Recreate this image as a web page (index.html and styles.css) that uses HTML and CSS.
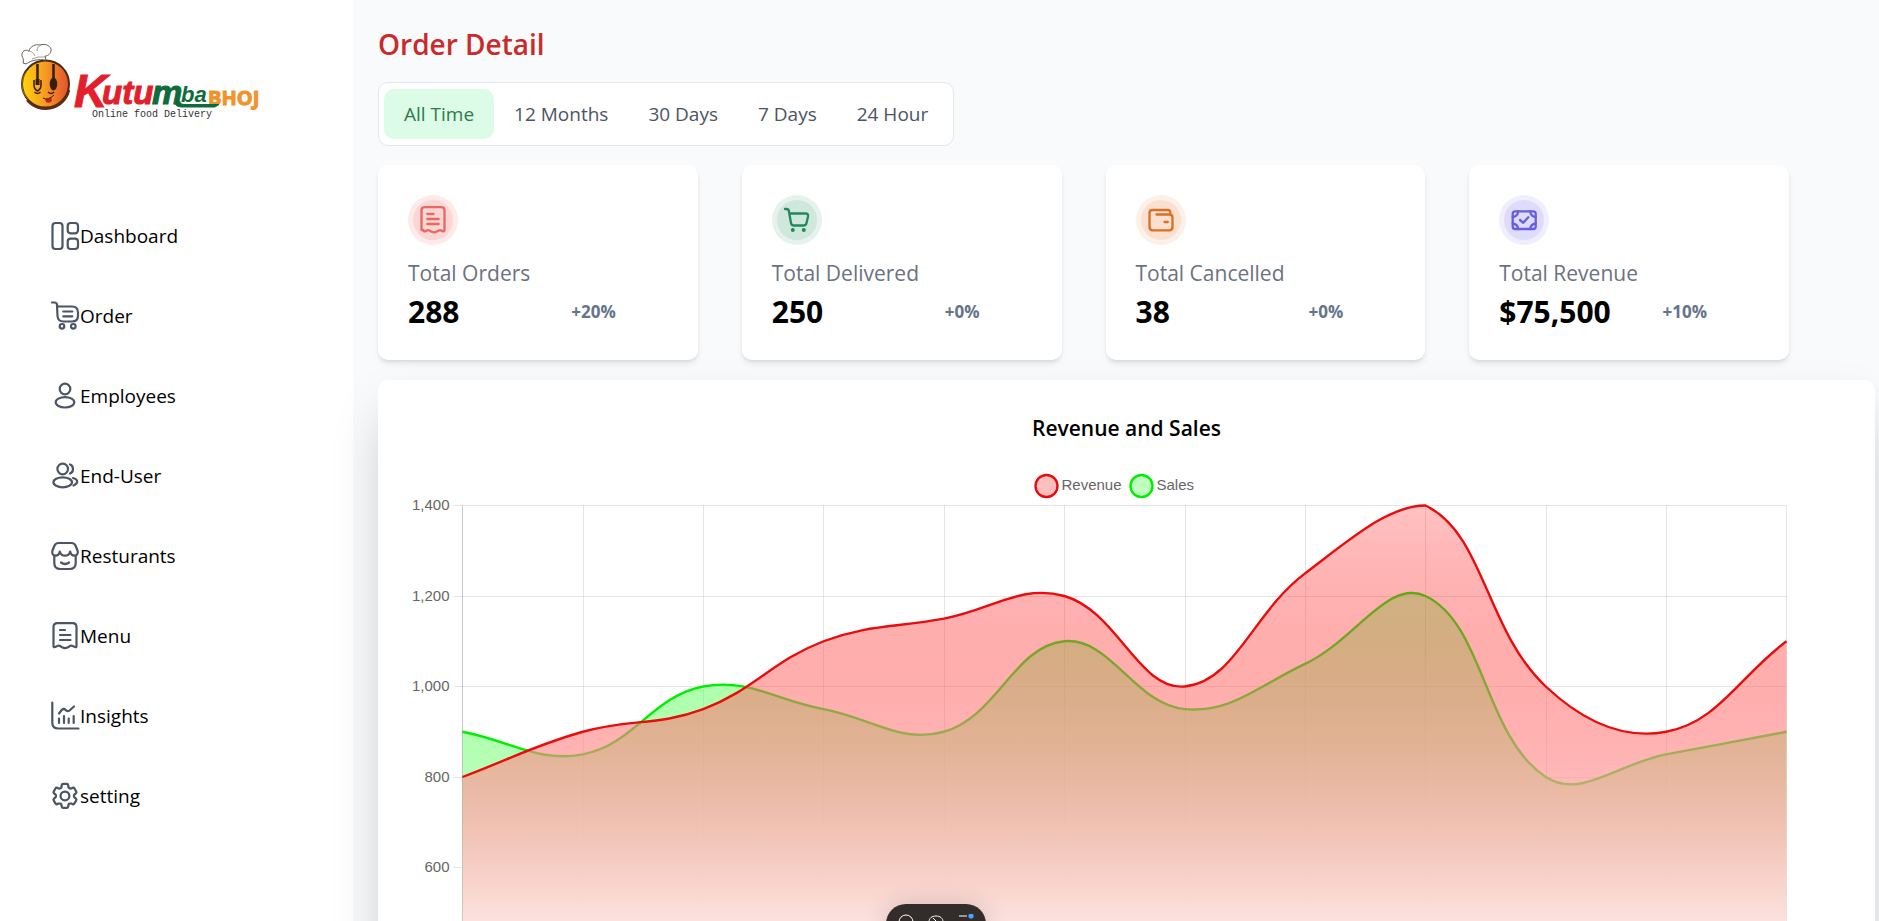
FILE: index.html
```html
<!DOCTYPE html>
<html lang="en">
<head>
<meta charset="utf-8">
<title>Kutumba Bhoj - Order Detail</title>
<link rel="stylesheet" href="styles.css">
</head>
<body>
<div class="app">
  <aside class="sidebar">
    <a class="brand" href="#" aria-label="Kutumba Bhoj">
      <svg class="logo" viewBox="0 0 280 110" width="280" height="110">
        <defs>
          <linearGradient id="face" x1="0" y1="0" x2="1" y2="0">
            <stop offset="0" stop-color="#ffd60a"/><stop offset=".5" stop-color="#f59a23"/><stop offset="1" stop-color="#e2502f"/>
          </linearGradient>
        </defs>
        <circle cx="45.500" cy="54" r="23.500" fill="url(#face)" stroke="#4a2b12" stroke-width="2"/>
        <path d="M27 70a24 24 0 0 0 42-10" fill="none" stroke="#5a2d10" stroke-width="2.500"/>
        <path d="M29 39a20.500 20.500 0 0 0-1 30" fill="none" stroke="#a86b10" stroke-width="1"/>
        <path d="M23 33c1-3 0-5-1-7-1-5 4-7 7-5 1-5 7-7 11-6 5-2 12 1 11 6-1 4-4 5-6 5l1 4c-8-1-14 0-20 4z" fill="#fff" stroke="#6b6259" stroke-width="1"/>
        <path d="M28 21q5 0 7 5M41 15q-5 2-4 6M32 29q6-3 13-2" fill="none" stroke="#8d857c" stroke-width=".8"/>
        <path d="M37.500 34v21M53.500 34v21" stroke="#3a1d0c" stroke-width="2.500"/>
        <path d="M34 50v5q0 4 3.500 6 3.500-2 3.500-6v-5M36.300 49v6M38.800 49v6" fill="none" stroke="#3a1d0c" stroke-width="1.500"/>
        <ellipse cx="53.500" cy="54" rx="3.800" ry="6.500" fill="#3a1d0c"/>
        <path d="M34.500 62q3 3 6 0M48 62q3 3 6 0" fill="none" stroke="#3a1d0c" stroke-width="1.200"/>
        <path d="M45 69q4 1 6-2l1 4q-3 3-6 1z" fill="#c81e1e"/>
        <path d="M43 68q5 3 11-3" fill="none" stroke="#3a1d0c"/>
        <g class="logo-word">
          <text class="logo-k" x="74" y="77">K</text>
          <text class="logo-utu" x="102" y="74">utu</text>
          <text class="logo-m" x="152" y="74">m</text>
          <text class="logo-ba" x="181" y="72">ba</text>
          <text class="logo-bhoj" x="208" y="75">BHOJ</text>
          <text class="logo-tag" x="92" y="87">Online food Delivery</text>
        </g>
        <path d="M175 73q1 4 7 4h33l4-2.500h-34q-5 0-5-3z" fill="#0f6b3a" stroke="#0f6b3a"/>
      </svg>
    </a>
    <nav class="menu">
      <a class="menu-item" href="#">
        <svg class="menu-icon" viewBox="0 0 30 30"><rect x="2.500" y="2" width="10" height="26" rx="3"/><rect x="17.700" y="2" width="10.300" height="10.300" rx="3"/><rect x="17.700" y="17.700" width="10.300" height="10.300" rx="3"/></svg>
        <span>Dashboard</span></a>
      <a class="menu-item" href="#">
        <svg class="menu-icon" viewBox="0 0 30 30"><path d="M2 1.500h2.500q2 0 2.500 2L7.500 5.500H22q6 0 6 6v3q0 6-6 6h-8.500q-5.500 0-6-5.500L7 4M13.300 10.500h9M13.300 15.300h9"/><circle cx="12" cy="25.300" r="2.300"/><circle cx="23.300" cy="25.300" r="2.300"/></svg>
        <span>Order</span></a>
      <a class="menu-item" href="#">
        <svg class="menu-icon" viewBox="0 0 30 30"><circle cx="15" cy="8" r="5.300"/><ellipse cx="15" cy="21.300" rx="9.300" ry="5.200"/></svg>
        <span>Employees</span></a>
      <a class="menu-item" href="#">
        <svg class="menu-icon" viewBox="0 0 30 30"><circle cx="12.700" cy="8" r="5.300"/><ellipse cx="12.700" cy="21.300" rx="9.300" ry="5"/><path d="M20 3.500c4 1.500 4 7.500 0 9M23 17c5.500 1.500 5.500 5.500 .5 7.500"/></svg>
        <span>End-User</span></a>
      <a class="menu-item" href="#">
        <svg class="menu-icon" viewBox="0 0 30 30"><path d="M8.500 2h13q3 0 4.200 3l2 5q.7 4.500-3.300 4.700-3.400 0-4.200-4.200-1 4.200-5.200 4.200t-5.200-4.200q-.8 4.200-4.200 4.200-4-.2-3.300-4.700l2-5q1.200-3 4.200-3zM4.300 14.500V22q0 6 6 6h9.400q6 0 6-6v-7.500M11 21.500q4 3 8 0"/></svg>
        <span>Resturants</span></a>
      <a class="menu-item" href="#">
        <svg class="menu-icon" viewBox="0 0 30 30"><path d="M3.500 25V6q0-3.800 3.800-3.800h15.400q3.800 0 3.800 3.800v19q0 1.500-1.500 1l-3-1.200q-1-.4-2 .2l-2.600 1.600q-2.400 1.200-4.800 0L10 25q-1-.6-2-.2L5 26q-1.500 .5-1.500-1zM10 9h5M10 14h10.500M10 19h10.500"/></svg>
        <span>Menu</span></a>
      <a class="menu-item" href="#">
        <svg class="menu-icon" viewBox="0 0 30 30"><path d="M2.300 1.500v20q0 6 6 6H28.500M9 17.500v4.500M14 15v7M18.700 17.500v4.500M23.700 15v7M9 12.500l2.700-3.500q2-2 4 0t3.800 .5l4.500-4"/></svg>
        <span>Insights</span></a>
      <a class="menu-item" href="#">
        <svg class="menu-icon" viewBox="0 0 30 30"><g class="gear" transform="translate(-1 -1) scale(1.330)"><path d="M9.594 3.940c.09-.542.56-.94 1.110-.94h2.593c.55 0 1.020.398 1.110.94l.213 1.281c.063.374.313.686.645.87.074.04.147.083.22.127.325.196.72.257 1.075.124l1.217-.456a1.125 1.125 0 0 1 1.370.49l1.296 2.247a1.125 1.125 0 0 1-.26 1.431l-1.003.827c-.293.241-.438.613-.43.992a7.723 7.723 0 0 1 0 .255c-.008.378.137.75.43.991l1.004.827c.424.35.534.955.26 1.430l-1.298 2.247a1.125 1.125 0 0 1-1.369.491l-1.217-.456c-.355-.133-.75-.072-1.076.124a6.470 6.470 0 0 1-.22.128c-.331.183-.581.495-.644.869l-.213 1.281c-.09.543-.56.94-1.110.94h-2.594c-.55 0-1.019-.398-1.110-.94l-.213-1.281c-.062-.374-.312-.686-.644-.87a6.520 6.520 0 0 1-.22-.127c-.325-.196-.72-.257-1.076-.124l-1.217.456a1.125 1.125 0 0 1-1.369-.49l-1.297-2.247a1.125 1.125 0 0 1 .26-1.431l1.004-.827c.292-.24.437-.613.43-.991a6.932 6.932 0 0 1 0-.255c.007-.38-.138-.751-.43-.992l-1.004-.827a1.125 1.125 0 0 1-.26-1.430l1.297-2.247a1.125 1.125 0 0 1 1.370-.491l1.216.456c.356.133.751.072 1.076-.124.072-.044.146-.086.22-.128.332-.183.582-.495.644-.869l.214-1.280Z"/><circle cx="12" cy="12" r="3.300"/></g></svg>
        <span>setting</span></a>
    </nav>
  </aside>

  <main class="main">
    <h1 class="page-title">Order Detail</h1>
    <div class="tabs">
      <button class="tab tab-active" type="button">All Time</button>
      <button class="tab" type="button">12 Months</button>
      <button class="tab" type="button">30 Days</button>
      <button class="tab" type="button">7 Days</button>
      <button class="tab" type="button">24 Hour</button>
    </div>

    <section class="cards">
      <article class="card">
        <svg class="card-icon tone-red" viewBox="0 0 50 50"><circle class="halo" cx="25" cy="25" r="25"/><circle class="disc" cx="25" cy="25" r="20"/><path d="M13.500 35V15.500q0-3.300 3.300-3.300h16.400q3.300 0 3.300 3.300V35q0 1.800-1.700 1.300l-2-.9q-1-.4-2 .1l-2.600 1.300q-2.200 1.200-4.400 0l-2.600-1.300q-1-.5-2-.1l-2 .9q-1.700.5-1.700-1.300zM19.300 19h6.200M19.300 24h11.400M19.300 29h11.400"/></svg>
        <h2 class="card-label">Total Orders</h2>
        <p class="card-row"><strong class="card-value">288</strong><span class="card-change">+20%</span></p>
      </article>
      <article class="card">
        <svg class="card-icon tone-green" viewBox="0 0 50 50"><circle class="halo" cx="25" cy="25" r="25"/><circle class="disc" cx="25" cy="25" r="20"/><path d="M13 14h1.500q2 0 2.300 1.800l2.200 12.200q.4 2.500 3 2.500h9.500q2.500 0 3-2.500l1.500-6.500q.6-3-2.400-3H17.500"/><circle class="wheel" cx="20.800" cy="35" r="2"/><circle class="wheel" cx="31.800" cy="35" r="2"/></svg>
        <h2 class="card-label">Total Delivered</h2>
        <p class="card-row"><strong class="card-value">250</strong><span class="card-change">+0%</span></p>
      </article>
      <article class="card">
        <svg class="card-icon tone-orange" viewBox="0 0 50 50"><circle class="halo" cx="25" cy="25" r="25"/><circle class="disc" cx="25" cy="25" r="20"/><path d="M34.300 19v-1.500q0-2.500-2.500-2.500H16.500q-3 0-3 3v14q0 3.300 3.300 3.300h16.400q3.300 0 3.300-3.300v-9.500q0-3-3-3H20.500M28.500 27h3.300"/></svg>
        <h2 class="card-label">Total Cancelled</h2>
        <p class="card-row"><strong class="card-value">38</strong><span class="card-change">+0%</span></p>
      </article>
      <article class="card">
        <svg class="card-icon tone-violet" viewBox="0 0 50 50"><circle class="halo" cx="25" cy="25" r="25"/><circle class="disc" cx="25" cy="25" r="20"/><rect x="13.700" y="16.300" width="23" height="17.700" rx="2.500"/><path d="M13.700 22q5-.5 5.500-5.700M31.200 16.300q.5 5.200 5.500 5.700M13.700 28.500q5 .5 5.500 5.500M31.200 34q.5-5 5.500-5.500M21 25l3.300 2.800 5-5.500"/></svg>
        <h2 class="card-label">Total Revenue</h2>
        <p class="card-row"><strong class="card-value">$75,500</strong><span class="card-change">+10%</span></p>
      </article>
    </section>

    <section class="chart-card">
      <h2 class="chart-title">Revenue and Sales</h2>
      <svg class="chart" id="chart" role="img" aria-label="Revenue and Sales by month"></svg>
    </section>
  </main>
</div>

<div class="dock">
  <button class="dock-button" type="button" aria-label="Search"><svg viewBox="0 0 16 16"><circle cx="8" cy="8" r="7"/></svg></button>
  <button class="dock-button" type="button" aria-label="Preview"><svg viewBox="0 0 16 16"><path d="M1 8c0-4 3-6 7-6s7 2 7 6-3 6-7 6-7-2-7-6zM5 4l3 3"/></svg></button>
  <button class="dock-button" type="button" aria-label="Options"><svg viewBox="0 0 16 16"><path d="M1 2h8M1 8h14M1 14h14"/><rect class="dock-badge" x="11" y="0" width="4" height="4" rx="1"/></svg></button>
</div>
<script src="chart.js"></script>
</body>
</html>
```
FILE: styles.css
```css
* { box-sizing: border-box; }

body {
  margin: 0;
  height: 100vh;
  overflow: hidden;
  font-family: "Open Sans", "Noto Sans", sans-serif;
  color: #000;
  background: #f8fafc;
}

h1, h2, p { margin: 0; }

.app {
  display: flex;
  align-items: flex-start;
}

.sidebar {
  flex: 0 0 353px;
  min-height: 100vh;
  background: #fff;
}

.brand {
  display: block;
  padding-top: 30px;
}

.logo { display: block; }
.logo-word { font-family: "Liberation Sans", sans-serif; font-weight: 700; }
.logo-k { font-size: 46px; font-style: italic; fill: #e31e2d; stroke: #e31e2d; }
.logo-utu { font-size: 33px; font-style: italic; fill: #e31e2d; stroke: #e31e2d; }
.logo-m { font-size: 34px; font-style: italic; fill: #0f6b3a; stroke: #0f6b3a; }
.logo-ba { font-size: 22px; font-style: italic; fill: #0f6b3a; }
.logo-bhoj { font-family: "Liberation Sans Narrow", "Open Sans", sans-serif; font-size: 20px; fill: #f0932b; stroke: #f0932b; }
.logo-tag { font-family: "Liberation Mono", monospace; font-size: 10px; font-weight: 400; fill: #333; }

.menu {
  display: flex;
  flex-direction: column;
  padding: 56px 0 0 50px;
}

.menu-item {
  display: flex;
  align-items: center;
  height: 80px;
  font-size: 19px;
  color: #000;
  text-decoration: none;
}

.menu-icon {
  width: 30px;
  height: 30px;
  fill: none;
  stroke: #4b5563;
  stroke-width: 2.2;
  stroke-linecap: round;
  stroke-linejoin: round;
}
.gear { stroke-width: 1.7; }

.main {
  flex: 1;
  min-width: 0;
  padding: 20px 4px 0 25px;
}

.page-title {
  font-size: 28px;
  font-weight: 600;
  line-height: 48px;
  color: #c92a2a;
}

.tabs {
  display: inline-flex;
  margin: 14px 0 19px;
  padding: 6px 5px;
  background: #fff;
  border: 1px solid #e5e7eb;
  border-radius: 10px;
  vertical-align: top;
}

.tab {
  height: 50px;
  padding: 0 20px;
  border: 0;
  border-radius: 10px;
  background: none;
  font: inherit;
  font-size: 19px;
  color: #4b5563;
}
.tab-active { background: #dcfce7; color: #2f7a4d; }

.cards {
  display: grid;
  grid-template-columns: repeat(4, 1fr);
  gap: 44px;
  padding-right: 86px;
}

.card {
  padding: 30px;
  height: 195px;
  background: #fff;
  border-radius: 10px;
  box-shadow: 0 4px 6px -1px rgba(0, 0, 0, .1), 0 2px 4px -2px rgba(0, 0, 0, .1);
}

.card-icon {
  display: block;
  width: 50px;
  height: 50px;
  fill: none;
  stroke: currentColor;
  stroke-width: 2.3;
  stroke-linecap: round;
  stroke-linejoin: round;
}
.halo, .disc, .wheel { stroke: none; }
.wheel { fill: currentColor; }
.tone-red { color: #e66a62; }
.tone-red .halo { fill: #fdeae9; }
.tone-red .disc { fill: #fbd6d4; }
.tone-green { color: #1f8a5b; }
.tone-green .halo { fill: #e5f3ec; }
.tone-green .disc { fill: #cfe7dc; }
.tone-orange { color: #dc6f22; }
.tone-orange .halo { fill: #fdf0e7; }
.tone-orange .disc { fill: #fae0d0; }
.tone-violet { color: #6560e0; }
.tone-violet .halo { fill: #efeefc; }
.tone-violet .disc { fill: #dedcfa; }

.card-label {
  padding-top: 8px;
  font-size: 21px;
  font-weight: 400;
  line-height: 40px;
  color: #6b7280;
}

.card-row {
  display: flex;
  align-items: center;
  justify-content: space-between;
  width: 80%;
  line-height: 38px;
}
.card-value { font-size: 30px; font-weight: 700; }
.card-change { font-size: 17px; font-weight: 700; color: #64748b; }

.chart-card {
  margin-top: 20px;
  padding: 24px;
  background: #fff;
  border-radius: 10px;
  box-shadow: 0 25px 50px -12px rgba(0, 0, 0, .25);
}

.chart-title {
  padding-bottom: 13px;
  font-size: 21px;
  font-weight: 600;
  line-height: 48px;
  text-align: center;
}

.chart {
  display: block;
  width: 100%;
  height: 700px;
  font-family: "Liberation Sans", Arial, sans-serif;
  font-size: 15px;
}
.chart text { fill: #666; }
.tick { text-anchor: end; }
.grid { stroke: rgba(0, 0, 0, .1); }
.axis { stroke: rgba(0, 0, 0, .12); }
.line { fill: none; stroke-width: 2.4; }
.line-sales { stroke: #00ee00; }
.line-revenue { stroke: #e80c0c; }
.key-sales { fill: rgba(0, 255, 0, .25); stroke: #00ee00; stroke-width: 2.4; }
.key-revenue { fill: rgba(255, 0, 0, .25); stroke: #e80c0c; stroke-width: 2.4; }

.dock {
  position: fixed;
  left: 50%;
  bottom: -31px;
  display: flex;
  gap: 14px;
  height: 48px;
  padding: 10px 12px 0;
  margin-left: -54px;
  background: #322c2b;
  border-radius: 20px;
  box-shadow: 0 0 24px rgba(0, 0, 0, .15);
}

.dock-button {
  width: 16px;
  height: 16px;
  padding: 0;
  border: 0;
  background: none;
}
.dock-button svg {
  display: block;
  width: 16px;
  height: 16px;
  fill: none;
  stroke: #fff;
}
.dock-badge { fill: #4aa3ff; stroke: #4aa3ff; }
```
FILE: chart.js
```js
const chart = document.getElementById("chart");
const series = [
  { name: "Sales", key: "sales", data: [900, 850, 1000, 950, 900, 1100, 950, 1050, 1200, 800, 850, 900] },
  { name: "Revenue", key: "revenue", data: [800, 900, 950, 1100, 1150, 1200, 1000, 1250, 1400, 1000, 900, 1100] }
];
const TOP = 40.5, BOTTOM = 674, LEFT = 60.5, MAX = 1400, FIRST_LABEL = 600, TENSION = 0.4;

// Control points weighted by the distance to each neighbour, kept inside the plot.
function curve(points) {
  const limit = y => Math.min(BOTTOM, Math.max(TOP, y));
  const controls = points.map((p, i) => {
    const a = points[i - 1] || p, b = points[i + 1] || p;
    const d1 = Math.hypot(p.x - a.x, p.y - a.y), d2 = Math.hypot(b.x - p.x, b.y - p.y);
    const f1 = TENSION * d1 / (d1 + d2), f2 = TENSION * d2 / (d1 + d2);
    return {
      inX: p.x - f1 * (b.x - a.x), inY: limit(p.y - f1 * (b.y - a.y)),
      outX: p.x + f2 * (b.x - a.x), outY: limit(p.y + f2 * (b.y - a.y))
    };
  });
  let d = `M${points[0].x} ${points[0].y}`;
  for (let i = 1; i < points.length; i++) {
    const o = controls[i - 1], n = controls[i];
    d += `C${o.outX} ${o.outY} ${n.inX} ${n.inY} ${points[i].x} ${points[i].y}`;
  }
  return d;
}

function gradient(id, color) {
  return `<linearGradient id="${id}" gradientUnits="userSpaceOnUse" x1="0" y1="20" x2="0" y2="520">
    <stop offset="0" stop-color="${color}" stop-opacity=".22"/><stop offset="1" stop-color="#fff"/></linearGradient>`;
}

function draw() {
  const width = chart.clientWidth, right = width - 64.5, step = (right - LEFT) / 11;
  const yOf = v => TOP + (MAX - v) * (BOTTOM - TOP) / MAX;
  let out = `<defs>${gradient("fill-sales", "#0f0")}${gradient("fill-revenue", "#f00")}</defs>`;

  for (let v = 0; v <= MAX; v += 200) {
    const y = Math.floor(yOf(v)) + 0.5;
    out += `<path class="grid" d="M${LEFT - 9} ${y}H${right}"/>`;
    if (v >= FIRST_LABEL) {
      out += `<text class="tick" x="${LEFT - 13}" y="${y + 4.5}">${v.toLocaleString("en-US")}</text>`;
    }
  }
  for (let i = 0; i <= 11; i++) {
    const x = Math.round(LEFT + i * step - 0.1) + 0.5;
    out += `<path class="grid" d="M${x} ${TOP}V${BOTTOM}"/>`;
  }
  for (const s of series) {
    const points = s.data.map((v, i) => ({ x: LEFT + i * step, y: yOf(v) }));
    const d = curve(points);
    out += `<path fill="url(#fill-${s.key})" d="${d}V${BOTTOM}H${LEFT}Z"/>`;
    out += `<path class="line line-${s.key}" d="${d}"/>`;
  }
  out += `<path class="axis" d="M${LEFT} ${TOP}V${BOTTOM}"/>`;

  const mid = (LEFT + right) / 2;
  out += `<circle class="key-revenue" cx="${mid - 78}" cy="21" r="11"/><text x="${mid - 63}" y="25">Revenue</text>`;
  out += `<circle class="key-sales" cx="${mid + 17}" cy="21" r="11"/><text x="${mid + 32}" y="25">Sales</text>`;
  chart.innerHTML = out;
}

draw();
window.addEventListener("resize", draw);
```
